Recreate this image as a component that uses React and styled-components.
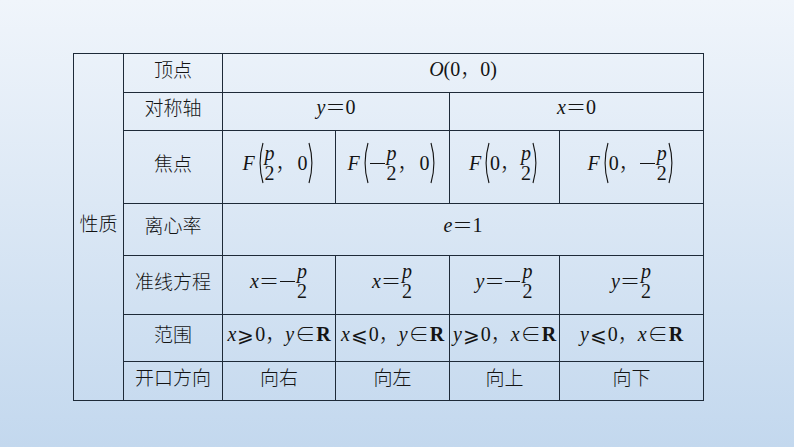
import React from 'react';
import styled, { createGlobalStyle } from 'styled-components';

const GlobalStyle = createGlobalStyle`
  html, body {
    margin: 0;
    padding: 0;
  }
  body {
    width: 794px;
    height: 447px;
    overflow: hidden;
    background: linear-gradient(180deg, #f0f5fb 0%, #dce8f5 45%, #c3d8ee 100%);
  }
`;

const Page = styled.div`
  padding: 53px 0 0 73px;
`;

const Table = styled.table`
  border-collapse: collapse;
  table-layout: fixed;
  width: 631px;
  border: 1.5px solid #1b2633;
  color: #141414;
  font-family: "Noto Sans CJK SC", "Liberation Serif", serif;
  font-size: 19px;
  font-weight: 300;
`;

const Row = styled.tr`
  height: ${p => p.$h}px;
`;

const Cell = styled.td`
  border: 1px solid #1e2a38;
  padding: 0 0 ${p => (p.$tall ? 8 : 10)}px;
  text-align: center;
  vertical-align: middle;
  white-space: nowrap;
  line-height: 1;
`;

const Math = styled.span`
  display: inline-flex;
  align-items: center;
  font-family: "Liberation Serif", "Noto Sans CJK SC", serif;
  font-size: 20px;
  font-weight: 400;
`;

const V = styled.i`
  font-style: italic;
  font-family: "Liberation Serif", serif;
  margin-right: ${p => p.$mr || 0}px;
`;

const Bold = styled.b`
  font-family: "Liberation Serif", serif;
  font-weight: 700;
`;

const Sym = styled.span`
  font-family: "Noto Sans CJK SC", "DejaVu Serif", serif;
  font-weight: 300;
  margin: 0 ${p => p.$m ?? 1}px;
`;

const Comma = styled.span`
  font-family: "Noto Sans CJK SC", sans-serif;
  font-weight: 300;
  width: ${p => p.$w || 20}px;
  text-align: left;
`;

const Frac = styled.span`
  display: inline-flex;
  flex-direction: column;
  align-items: center;
  line-height: 1.02;
  margin: 0 1px;
`;

const Paren = styled.svg`
  width: 8px;
  height: 42px;
  flex: none;
`;

const Dash = styled.span`
  display: inline-block;
  width: 15px;
  height: 1px;
  background: #141414;
  margin: 0 1px;
`;

const Left = () => (
  <Paren viewBox="0 0 8 42">
    <path d="M7 1 Q1.2 21 7 41" fill="none" stroke="#141414" strokeWidth="1.1" />
  </Paren>
);

const Right = () => (
  <Paren viewBox="0 0 8 42">
    <path d="M1 1 Q6.8 21 1 41" fill="none" stroke="#141414" strokeWidth="1.1" />
  </Paren>
);

const P2 = () => (
  <Frac>
    <V>p</V>
    <span>2</span>
  </Frac>
);

const Eq = () => <Sym $m={0}>＝</Sym>;

const focus = [
  <Math><V $mr={1}>F</V><Left /><P2 /><Comma $w={22}>，</Comma>0<Right /></Math>,
  <Math><V $mr={1}>F</V><Left /><Dash /><P2 /><Comma $w={22}>，</Comma>0<Right /></Math>,
  <Math><V $mr={1}>F</V><Left />0<Comma $w={20}>，</Comma><P2 /><Right /></Math>,
  <Math><V $mr={1}>F</V><Left />0<Comma $w={20}>，</Comma><Dash /><P2 /><Right /></Math>,
];

const directrix = [
  <Math><V>x</V><Eq /><Dash /><P2 /></Math>,
  <Math><V>x</V><Eq /><P2 /></Math>,
  <Math><V>y</V><Eq /><Dash /><P2 /></Math>,
  <Math><V>y</V><Eq /><P2 /></Math>,
];

const range = [
  <Math><V>x</V><Sym>⩾</Sym>0<Comma>，</Comma><V>y</V><Sym>∈</Sym><Bold>R</Bold></Math>,
  <Math><V>x</V><Sym>⩽</Sym>0<Comma>，</Comma><V>y</V><Sym>∈</Sym><Bold>R</Bold></Math>,
  <Math><V>y</V><Sym>⩾</Sym>0<Comma>，</Comma><V>x</V><Sym>∈</Sym><Bold>R</Bold></Math>,
  <Math><V>y</V><Sym>⩽</Sym>0<Comma>，</Comma><V>x</V><Sym>∈</Sym><Bold>R</Bold></Math>,
];

const opening = ['向右', '向左', '向上', '向下'];

export default function App() {
  return (
    <Page>
      <GlobalStyle />
      <Table>
        <colgroup>
          <col style={{ width: 50 }} />
          <col style={{ width: 99 }} />
          <col style={{ width: 113 }} />
          <col style={{ width: 114 }} />
          <col style={{ width: 110 }} />
          <col style={{ width: 144 }} />
        </colgroup>
        <tbody>
          <Row $h={39}>
            <Cell rowSpan={7}>性质</Cell>
            <Cell>顶点</Cell>
            <Cell colSpan={4}>
              <Math><V>O</V>(0<Comma $w={20}>，</Comma>0)</Math>
            </Cell>
          </Row>
          <Row $h={38}>
            <Cell>对称轴</Cell>
            <Cell colSpan={2}><Math><V>y</V><Eq />0</Math></Cell>
            <Cell colSpan={2}><Math><V>x</V><Eq />0</Math></Cell>
          </Row>
          <Row $h={73}>
            <Cell>焦点</Cell>
            {focus.map((f, i) => <Cell key={i} $tall>{f}</Cell>)}
          </Row>
          <Row $h={52}>
            <Cell>离心率</Cell>
            <Cell colSpan={4}><Math><V>e</V><Eq />1</Math></Cell>
          </Row>
          <Row $h={59}>
            <Cell>准线方程</Cell>
            {directrix.map((d, i) => <Cell key={i} $tall>{d}</Cell>)}
          </Row>
          <Row $h={47}>
            <Cell>范围</Cell>
            {range.map((r, i) => <Cell key={i}>{r}</Cell>)}
          </Row>
          <Row $h={39}>
            <Cell>开口方向</Cell>
            {opening.map(o => <Cell key={o}>{o}</Cell>)}
          </Row>
        </tbody>
      </Table>
    </Page>
  );
}
